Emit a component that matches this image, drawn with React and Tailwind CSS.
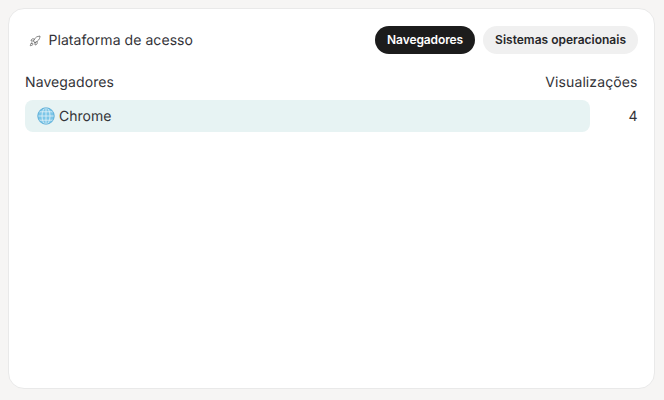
import React from "react";
import { Rocket } from "lucide-react";

function Globe() {
  return (
    <svg width="18" height="18" viewBox="0 0 18 18" fill="none" className="shrink-0">
      <circle cx="9" cy="9" r="8.5" fill="#7cc6e8" />
      <g stroke="#e4f3f8" strokeWidth="0.8" fill="none">
        <ellipse cx="9" cy="9" rx="4" ry="8.2" />
        <path d="M9 .8v16.4M.8 9h16.4M2 4.8h14M2 13.2h14" />
      </g>
      <circle cx="9" cy="9" r="8.2" stroke="#58a9d3" strokeWidth="0.7" fill="none" />
    </svg>
  );
}

export default function App() {
  return (
    <div className="h-[400px] w-[664px] bg-[#f6f5f4] pt-2 pl-2 pr-[9px] pb-[11px] font-['Inter',sans-serif] text-[#333338] [text-rendering:geometricPrecision]">
      <div className="h-full rounded-2xl border border-[#e9e9e9] bg-white px-4 pt-[17px]">
        <div className="flex h-7 items-center justify-between">
          <div className="flex items-center gap-[7.5px] pl-[4px] pt-px">
            <Rocket size={12} strokeWidth={1.25} className="text-[#444]" />
            <span className="text-sm leading-5 tracking-[0.06px]">Plataforma de acesso</span>
          </div>
          <div className="flex items-center gap-2">
            <button className="h-7 w-[100px] rounded-full bg-[#1c1c1c] text-xs font-semibold tracking-[-0.1px] text-white">Navegadores</button>
            <button className="h-7 rounded-full bg-[#f0f0f0] px-3 text-xs font-semibold text-[#27272a]">Sistemas operacionais</button>
          </div>
        </div>
        <div className="mt-[19px] flex items-center justify-between pr-[0.5px] text-sm leading-5 tracking-[0.1px]">
          <span>Navegadores</span>
          <span>Visualizações</span>
        </div>
        <div className="mt-[7px] flex items-center gap-[38px] pr-[0.5px] text-sm">
          <div className="flex h-8 flex-1 items-center gap-[4px] rounded-lg bg-[#e7f3f3] pl-3">
            <Globe />
            <span className="pt-px">Chrome</span>
          </div>
          <span className="pt-px">4</span>
        </div>
      </div>
    </div>
  );
}
